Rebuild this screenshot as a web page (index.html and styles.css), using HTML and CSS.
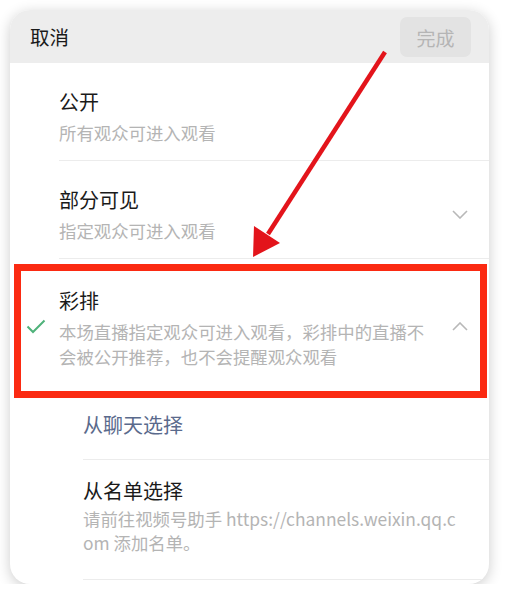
FILE: index.html
```html
<!DOCTYPE html>
<html>
<head>
  <title>可见范围</title>
  <link rel="stylesheet" href="styles.css">
</head>
<body>
  <div class="sheet">
    <div class="bar">
      <span class="cancel">取消</span>
      <button class="done">完成</button>
    </div>

    <div class="opt">
      <div class="mark"></div>
      <div class="main">
        <div class="text">
          <div class="title">公开</div>
          <div class="sub">所有观众可进入观看</div>
        </div>
      </div>
    </div>

    <div class="opt">
      <div class="mark"></div>
      <div class="main">
        <div class="text">
          <div class="title">部分可见</div>
          <div class="sub">指定观众可进入观看</div>
        </div>
        <svg class="chev" width="16" height="9" viewBox="0 0 16 9"><path d="M1 1l7 7 7-7" fill="none" stroke="#b8b8b8" stroke-width="1.6"/></svg>
      </div>
    </div>

    <div class="opt open">
      <div class="mark">
        <svg width="20" height="15" viewBox="0 0 20 15"><path d="M1.5 7.5l5.5 5.5 11.5-11.5" fill="none" stroke="#4fb27a" stroke-width="2"/></svg>
      </div>
      <div class="main">
        <div class="text">
          <div class="title">彩排</div>
          <div class="sub">本场直播指定观众可进入观看，彩排中的直播不会被公开推荐，也不会提醒观众观看</div>
        </div>
        <svg class="chev" width="16" height="9" viewBox="0 0 16 9"><path d="M1 8l7-7 7 7" fill="none" stroke="#b8b8b8" stroke-width="1.6"/></svg>
      </div>
    </div>

    <div class="pick link">
      <div class="title">从聊天选择</div>
    </div>
    <div class="pick">
      <div class="title">从名单选择</div>
      <div class="sub">请前往视频号助手 https://channels.weixin.qq.com 添加名单。</div>
    </div>
  </div>

  <!-- annotation -->
  <div class="highlight"></div>
  <svg class="arrow" width="512" height="602" viewBox="0 0 512 602">
    <line x1="385" y1="52" x2="268" y2="234" stroke="#e3141b" stroke-width="4.5"/>
    <polygon points="253,257 254,226 280,243" fill="#e3141b"/>
  </svg>
</body>
</html>
```

FILE: styles.css
```css
body {
  margin: 0;
  background: #fff;
  font-family: "Noto Sans CJK SC", "Noto Sans", sans-serif;
  color: #1a1a1a;
}

.sheet {
  margin: 10px 0 0 10px;
  width: 479px;
  height: 574px;
  border-radius: 20px;
  overflow: hidden;
  background: #fff;
  box-shadow: 0 3px 14px rgba(0, 0, 0, 0.2);
}

.bar {
  height: 53px;
  background: #ededed;
  display: flex;
  align-items: center;
  justify-content: space-between;
  padding: 0 18px 0 20px;
}

.cancel {
  font-size: 19.5px;
  line-height: 28px;
}

.done {
  width: 71px;
  height: 40px;
  margin-top: 1px;
  border: none;
  border-radius: 7px;
  background: #e3e3e3;
  color: #b5b5b5;
  font-family: inherit;
  font-size: 19px;
  padding: 0;
}

.opt {
  display: flex;
}

.mark {
  width: 49px;
  flex: none;
  display: flex;
  align-items: center;
  justify-content: center;
  padding-left: 2px;
  box-sizing: border-box;
}

.main {
  flex: 1;
  display: flex;
  align-items: center;
  padding: 25px 21px 15px 0;
  border-bottom: 1px solid #ececec;
}

.text {
  flex: 1;
}

.title {
  font-size: 20px;
  line-height: 28px;
}

.sub {
  margin-top: 4px;
  font-size: 17.4px;
  line-height: 25px;
  color: #b4b4b4;
}

.open .main {
  padding: 28px 21px 30px 0;
  border-bottom: none;
}

.open .text {
  padding-right: 20px;
}

.open .chev {
  margin-top: -4px;
}

.open .mark svg {
  margin-top: -6px;
}

.pick {
  margin-left: 73px;
  padding: 17px 30px 24px 0;
  border-bottom: 1px solid #ececec;
}

.pick .sub {
  margin-top: 2px;
  line-height: 24px;
  word-break: break-all;
}

.pick.link {
  padding: 12px 0 20px;
}

.link .title {
  color: #5a6a8c;
}

.highlight {
  position: absolute;
  left: 14px;
  top: 264px;
  width: 473px;
  height: 134px;
  border: 7px solid #fb2a12;
  box-sizing: border-box;
}

.arrow {
  position: absolute;
  left: 0;
  top: 0;
}
```
